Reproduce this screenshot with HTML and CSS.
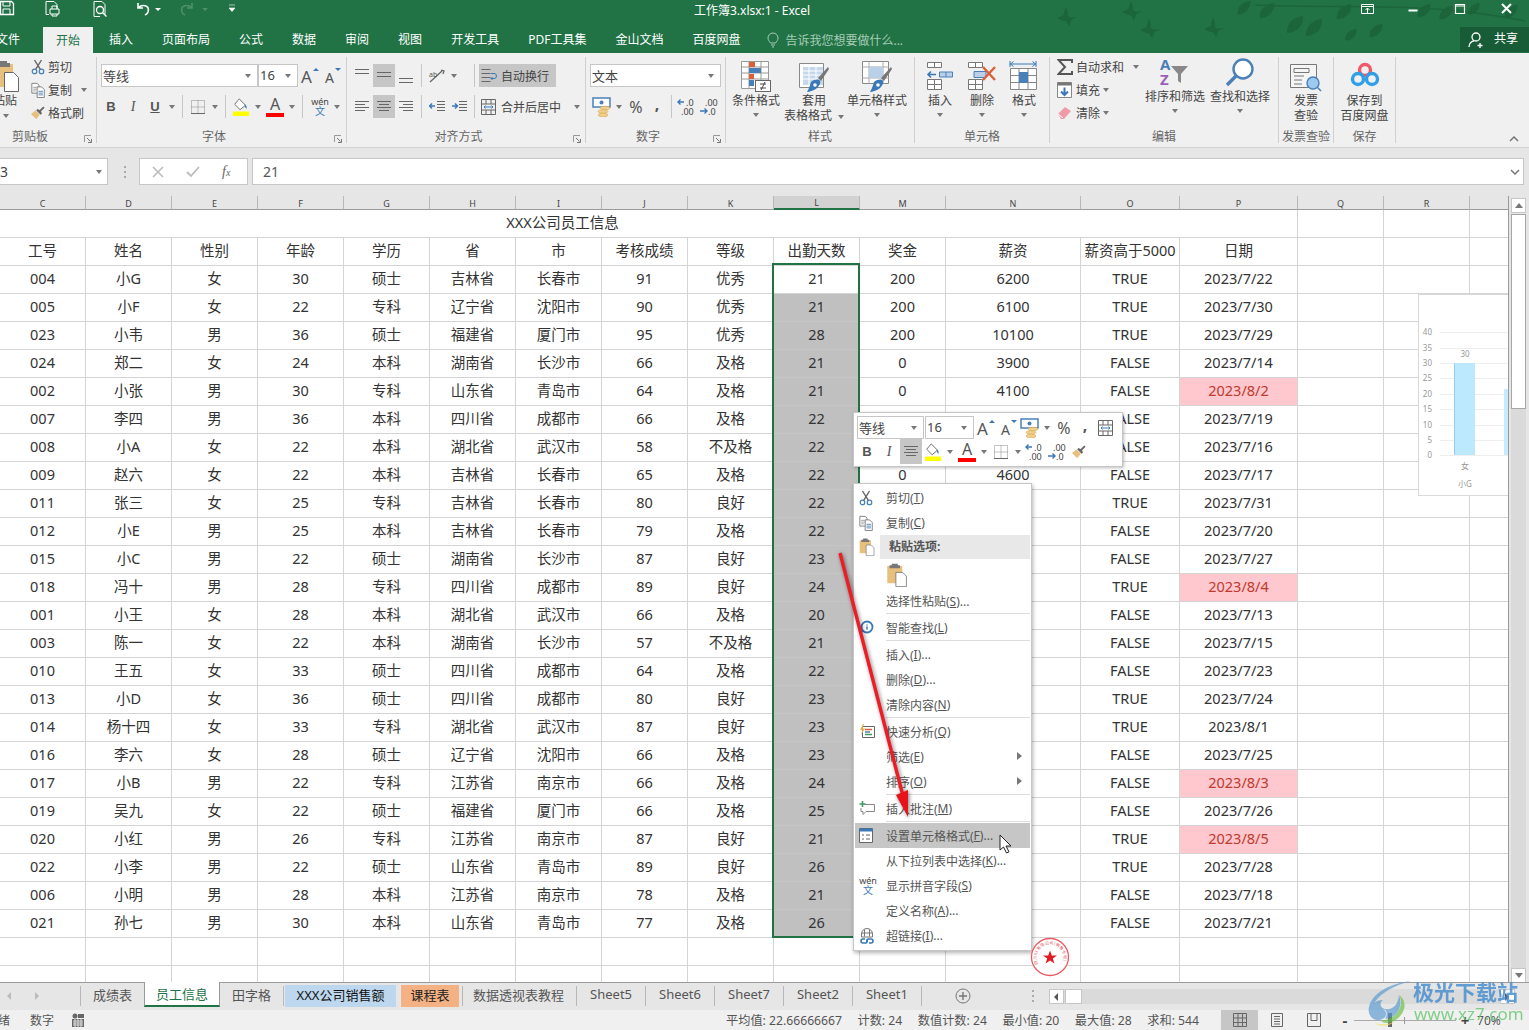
FILE: index.html
```html
<!DOCTYPE html>
<html lang="zh-CN">
<head>
<meta charset="utf-8">
<title>工作簿3.xlsx:1 - Excel</title>
<link rel="stylesheet" href="styles.css">
</head>
<body>
<svg class="defs" width="0" height="0">
<symbol id="scissors" viewBox="0 0 16 18"><circle cx="4" cy="14" r="2.6" fill="none" stroke="#4a7fb5" stroke-width="1.4"/><circle cx="12" cy="14" r="2.6" fill="none" stroke="#4a7fb5" stroke-width="1.4"/><path d="M5.5 11.5 12 1M10.5 11.5 4 1" stroke="#666" stroke-width="1.6" fill="none"/></symbol>
<symbol id="copy" viewBox="0 0 16 18"><path d="M.5 1.500h6l2 2v9h-8z" fill="#fff" stroke="#777"/><path d="M2 6h4M2 8h4M2 10h3" stroke="#999"/><path d="M6.500 5.500h5l3 3v9h-8z" fill="#fff" stroke="#777"/><path d="M8 10.500h5M8 12.500h5M8 14.500h5" stroke="#4a7fb5"/></symbol>
<symbol id="brush" viewBox="0 0 18 16"><path d="M1 9l6 6 4-5-5-5z" fill="#e8c07d"/><path d="M7 5l5 5 1.500-1.500-1-2.500 4-4L15 .5l-4 4L8 3.500z" fill="#666"/></symbol>
<symbol id="paste" viewBox="0 0 28 32"><path d="M1 4h20v23H1z" fill="#e8c07d"/><path d="M7 1h8v2h3v4H4V3h3z" fill="#777"/><path d="M12.500 12.500h9l5 5v14h-14z" fill="#fff" stroke="#666"/></symbol>
<symbol id="launch" viewBox="0 0 8 8"><path d="M.5 7V.5H7" fill="none" stroke="#999"/><path d="M3 3l3.500 3.500M7.500 4v3.500H4" fill="none" stroke="#777"/></symbol>
<symbol id="altop" viewBox="0 0 16 20"><path d="M1 3.500h14M1 7.500h14" stroke="#666" fill="none"/></symbol>
<symbol id="almid" viewBox="0 0 16 20"><path d="M1 6.500h14M1 10.500h14" stroke="#666" fill="none"/></symbol>
<symbol id="albot" viewBox="0 0 16 20"><path d="M1 12.500h14M1 16.500h14" stroke="#666" fill="none"/></symbol>
<symbol id="alleft" viewBox="0 0 16 14"><path d="M1 1.500h14M1 4.500h10M1 7.500h14M1 10.500h10" stroke="#666" fill="none"/></symbol>
<symbol id="alcenter" viewBox="0 0 16 14"><path d="M1 1.500h14M3 4.500h10M1 7.500h14M3 10.500h10" stroke="#666" fill="none"/></symbol>
<symbol id="alright" viewBox="0 0 16 14"><path d="M1 1.500h14M5 4.500h10M1 7.500h14M5 10.500h10" stroke="#666" fill="none"/></symbol>
<symbol id="border" viewBox="0 0 16 16"><path d="M1.500 1.500h13v13h-13zM8 1.500v13M1.500 8h13" fill="none" stroke="#888" stroke-dasharray="1 1"/><path d="M1 14.500h14" stroke="#666"/></symbol>
<symbol id="fill" viewBox="0 0 20 20"><path d="M8 1l7 7-6 5-6-6z" fill="#fff" stroke="#666"/><path d="M14 7c2 1 3 3 2 5-1.500-1-2-3-2-5z" fill="#4a7fb5"/><rect x="1" y="15" width="18" height="5" fill="#ff0"/></symbol>
<symbol id="acct" viewBox="0 0 20 20"><rect x="1" y="1" width="17" height="9" fill="#fff" stroke="#4a80b8" stroke-width="1.500"/><circle cx="9.500" cy="5.500" r="2" fill="#4a80b8"/><ellipse cx="13" cy="11" rx="5" ry="1.800" fill="#f0cf8e" stroke="#d8a850" stroke-width=".6"/><ellipse cx="11" cy="14.500" rx="5" ry="1.800" fill="#f0cf8e" stroke="#d8a850" stroke-width=".6"/><ellipse cx="11" cy="18" rx="5" ry="1.800" fill="#f0cf8e" stroke="#d8a850" stroke-width=".6"/></symbol>
<symbol id="decinc" viewBox="0 0 20 18"><path d="M7 4H1M3.500 1.500 1 4l2.500 2.500" fill="none" stroke="#3a78b8" stroke-width="1.400"/><text x="9" y="7.500" class="svt">.0</text><text x="4" y="16.500" class="svt">.00</text></symbol>
<symbol id="decdec" viewBox="0 0 20 18"><text x="6" y="7.500" class="svt">.00</text><path d="M1 13h7M5.500 10.500 8 13l-2.500 2.500" fill="none" stroke="#3a78b8" stroke-width="1.400"/><text x="9" y="16.500" class="svt">.0</text></symbol>
<symbol id="merge" viewBox="0 0 16 16"><path d="M.5.5h14v15H.5zM.5 5h14M.5 11h14M5 .5V5M10 .5V5M5 11v4.500M10 11v4.500" fill="none" stroke="#666"/><path d="M3 8h9M4.500 6.500 3 8l1.500 1.500M10.500 6.500 12 8l-1.500 1.500" fill="none" stroke="#3a78b8"/></symbol>
<symbol id="grow" viewBox="0 0 20 18"><text x="1" y="16" class="sva">A</text><path d="M13 4l3-3 3 3z" fill="#3a78b8"/></symbol>
<symbol id="shrink" viewBox="0 0 20 18"><text x="3" y="16" class="svb">A</text><path d="M13 1l3 3 3-3z" fill="#3a78b8"/></symbol>
<symbol id="leaf" viewBox="0 0 20 20"><path d="M2 18C1 9 8 2 18 1c1 9-6 17-16 17z" fill="#1c653b"/></symbol>
<symbol id="bird" viewBox="0 0 30 30"><path d="M1 16c5-1 7-3 9-3L13 1c3 4 4 8 3 12l4 3 9-1-8 4-3 9-4-7-5-1z" fill="#1c653b"/></symbol>
</svg>

<div class="app">
<header class="head">
<svg class="leaves" width="489" height="53" viewBox="0 0 489 53">
<path d="M215 5c60 3 120 0 180 4 30 2 60 6 90 12" fill="none" stroke="#1c653b" stroke-width="1.500"/>
<use href="#bird" x="15" y="6" width="24" height="22"/><use href="#bird" x="80" y="0" width="24" height="22"/><use href="#bird" x="98" y="18" width="24" height="22"/><use href="#bird" x="162" y="17" width="24" height="22"/>
<use href="#leaf" x="195" y="0" width="18" height="16"/><use href="#leaf" x="216" y="2" width="22" height="18"/><use href="#leaf" x="245" y="15" width="20" height="20"/><use href="#leaf" x="262" y="18" width="24" height="20"/><use href="#leaf" x="295" y="1" width="18" height="22"/><use href="#leaf" x="298" y="28" width="26" height="14"/><use href="#leaf" x="328" y="22" width="16" height="18"/><use href="#leaf" x="375" y="3" width="18" height="16"/><use href="#leaf" x="395" y="5" width="22" height="16"/><use href="#leaf" x="425" y="2" width="18" height="14"/><use href="#leaf" x="460" y="4" width="22" height="16"/>
</svg>
<div class="titlebar">
<svg class="qat" width="694" height="26" viewBox="0 0 694 26">
<path d="M.5 1.500h11l2 2v11H.5z" fill="none" stroke="#fff" stroke-width="1.300"/><path d="M3 2v4h7V2M3 14V9h7v5" fill="none" stroke="#fff"/>
<path d="M46 1.500h8l3 3v4M46 1.500v13h3" fill="none" stroke="#fff"/><path d="M50 9h9v5h-9zM52 9V6h5v3M52 14v2h5v-2" fill="none" stroke="#fff"/>
<path d="M94 1.500h8l3 3v10M94 1.500v15h6" fill="none" stroke="#fff"/><circle cx="100" cy="10" r="3.500" fill="none" stroke="#fff" stroke-width="1.300"/><path d="M102.500 12.500l4 4" stroke="#fff" stroke-width="1.500"/>
<path d="M138 3v5h5M138.500 7.500C142 4 150 5 148 12c-.5 1.500-2 2.500-3 3" fill="none" stroke="#fff" stroke-width="1.600"/><path d="M155 8h6l-3 3z" fill="#fff"/>
<path d="M192 3v5h-5M191.500 7.500C188 4 180 5 182 12c.5 1.500 2 2.500 3 3" fill="none" stroke="#4d8f69" stroke-width="1.600"/><path d="M202 8h6l-3 3z" fill="#4d8f69"/>
<path d="M229 5h6M229 8h6l-3 3.500z" fill="#fff" stroke="#fff" stroke-width=".6"/>
</svg>
<div class="wintitle">工作簿3.xlsx:1 - Excel</div>
<svg class="winbtns" width="184" height="26" viewBox="0 0 184 26">
<path d="M16.500 4.500h12v9h-12zM17 6.500h11" fill="none" stroke="#fff"/><path d="M22.500 13V8M20.500 10l2-2 2 2" fill="none" stroke="#fff"/>
<path d="M63.500 10.500h9" stroke="#fff" stroke-width="2"/>
<path d="M110.500 4.500h9v9h-9zM110 6h10" fill="none" stroke="#fff" stroke-width="1.200"/>
<path d="M157 4l9 9M166 4l-9 9" stroke="#fff" stroke-width="2"/>
</svg>
</div>
<nav class="tabbar">
<span class="tb tb-file">文件</span><span class="tb tb-on">开始</span><span class="tb">插入</span><span class="tb">页面布局</span><span class="tb">公式</span><span class="tb">数据</span><span class="tb">审阅</span><span class="tb">视图</span><span class="tb">开发工具</span><span class="tb">PDF工具集</span><span class="tb">金山文档</span><span class="tb">百度网盘</span>
<span class="tellme"><svg width="12" height="16" viewBox="0 0 12 16"><path d="M3.500 11C2 9 1 8 1 6a5 5 0 0 1 10 0c0 2-1 3-2.500 5zM4 13h4M5 15h2" fill="none" stroke="#a8ccb6"/></svg>告诉我您想要做什么...</span>
<span class="share"><svg width="18" height="18" viewBox="0 0 18 18"><circle cx="8" cy="6" r="4" fill="none" stroke="#fff" stroke-width="1.300"/><path d="M1 16c0-4 3-6 5-6M12 12v5M9.500 14.500h5" fill="none" stroke="#fff" stroke-width="1.300"/></svg><span class="share-t">共享</span></span>
</nav>
</header>

<section class="ribbon">
<div class="grp g1">
<div class="body">
<div class="pastebtn"><svg class="paste-big" width="30" height="32"><use href="#paste"/></svg><span class="paste-t">粘贴</span><i class="car"></i></div>
<div class="smcol">
<div class="sm"><span class="smi"><svg width="14" height="16"><use href="#scissors"/></svg></span>剪切</div>
<div class="sm"><span class="smi"><svg width="15" height="16"><use href="#copy"/></svg></span>复制<span class="c12 ml6"><i class="car"></i></span></div>
<div class="sm"><span class="smi"><svg width="16" height="14"><use href="#brush"/></svg></span>格式刷</div>
</div>
</div>
<div class="lbl lbl-g1">剪贴板</div>
<svg class="launch" width="8" height="8"><use href="#launch"/></svg>
</div>

<div class="grp g2">
<div class="body rows">
<div class="row">
<span class="sel w157"><b class="selv">等线</b><i class="car"></i></span><span class="sel w40"><b class="selv">16</b><i class="car"></i></span>
<span class="c22 ml1"><svg width="20" height="18"><use href="#grow"/></svg></span><span class="c22"><svg width="20" height="18"><use href="#shrink"/></svg></span>
</div>
<div class="row">
<span class="c22 tb-b">B</span><span class="c22 tb-i">I</span><span class="c22 tb-u">U</span><span class="c12"><i class="car"></i></span><i class="vs"></i>
<span class="c22"><svg width="16" height="16"><use href="#border"/></svg></span><span class="c12"><i class="car"></i></span><i class="vs"></i>
<span class="c22"><svg width="18" height="18"><use href="#fill"/></svg></span><span class="c12"><i class="car"></i></span>
<span class="c22"><span class="fa">A</span></span><span class="c12"><i class="car"></i></span><i class="vs"></i>
<span class="c22 wen ml2"><span>wén</span><em>文</em></span><span class="c12"><i class="car"></i></span>
</div>
</div>
<div class="lbl lbl-ln">字体</div>
<svg class="launch" width="8" height="8"><use href="#launch"/></svg>
</div>

<div class="grp g3">
<div class="body rows">
<div class="row">
<span class="c22"><svg width="16" height="20"><use href="#altop"/></svg></span><span class="c22 hl"><svg width="16" height="20"><use href="#almid"/></svg></span><span class="c22"><svg width="16" height="20"><use href="#albot"/></svg></span><i class="vs"></i>
<span class="c22"><svg width="18" height="16" viewBox="0 0 18 16"><path d="M2 14 14 3M13 2l3 1-1 3" fill="none" stroke="#666" stroke-width="1.300"/><text x="1" y="9" class="svb2">ab</text></svg></span><span class="c12"><i class="car"></i></span><i class="vs vs10"></i>
<span class="wrapbtn hl"><svg width="16" height="16" viewBox="0 0 16 16"><path d="M.5 1.500h9M.5 5.500h9M.5 9.500h9M.5 13.500h9" stroke="#666" fill="none"/><path d="M10 5.500h3a2 2 0 0 1 0 5h-3M11.500 9l-1.500 1.500 1.500 1.500" fill="none" stroke="#3a78b8"/></svg>自动换行</span>
</div>
<div class="row">
<span class="c22"><svg width="16" height="14"><use href="#alleft"/></svg></span><span class="c22 hl"><svg width="16" height="14"><use href="#alcenter"/></svg></span><span class="c22"><svg width="16" height="14"><use href="#alright"/></svg></span><i class="vs"></i>
<span class="c22"><svg width="16" height="14" viewBox="0 0 16 14"><path d="M8 1.500h8M8 4.500h8M8 7.500h8M8 10.500h8" stroke="#666"/><path d="M6 6H1M3 3.500 .5 6 3 8.500" fill="none" stroke="#3a78b8" stroke-width="1.500"/></svg></span><span class="c22"><svg width="16" height="14" viewBox="0 0 16 14"><path d="M8 1.500h8M8 4.500h8M8 7.500h8M8 10.500h8" stroke="#666"/><path d="M1 6h5M4 3.500 6.500 6 4 8.500" fill="none" stroke="#3a78b8" stroke-width="1.500"/></svg></span><i class="vs"></i>
<span class="mergebtn"><svg width="16" height="16"><use href="#merge"/></svg>合并后居中<span class="c12 ml6"><i class="car"></i></span></span>
</div>
</div>
<div class="lbl lbl-ln">对齐方式</div>
<svg class="launch" width="8" height="8"><use href="#launch"/></svg>
</div>

<div class="grp g4">
<div class="body rows">
<div class="row"><span class="sel w131"><b class="selv">文本</b><i class="car"></i></span></div>
<div class="row"><span class="c22 ml1"><svg width="20" height="20"><use href="#acct"/></svg></span><span class="c12"><i class="car"></i></span><span class="c22 pct">%</span><span class="c20 cma">,</span><i class="vs"></i><span class="c22"><svg width="20" height="18"><use href="#decinc"/></svg></span><span class="c22"><svg width="20" height="18"><use href="#decdec"/></svg></span></div>
</div>
<div class="lbl lbl-ln">数字</div>
<svg class="launch" width="8" height="8"><use href="#launch"/></svg>
</div>

<div class="grp g5">
<div class="body">
<div class="big w60">
<svg width="30" height="32" viewBox="0 0 30 32"><path d="M.5.500h27v27H.5zM.5 6h27M.5 12h27M.5 18h27M8 .5v27M20 .5v27" fill="#fff" stroke="#999"/><rect x="8" y="1" width="6" height="5" fill="#d9613a"/><rect x="8" y="7" width="12" height="5" fill="#4a80b8"/><rect x="8" y="13" width="5" height="5" fill="#d9613a"/><rect x="8" y="19" width="5" height="6" fill="#4a80b8"/><rect x="14.500" y="19.500" width="15" height="11" fill="#fff" stroke="#666"/><path d="M19 23h6M19 27h6M24 21l-4 8" stroke="#444" fill="none"/></svg>
<span>条件格式</span><i class="car"></i></div>
<div class="big w56">
<svg width="30" height="32" viewBox="0 0 30 32"><path d="M.5 2.500h24v24H.5z" fill="#fff" stroke="#888"/><path d="M4 6h20v18H4z" fill="#c5d7ea"/><path d="M4 10h20M4 14h20M4 18h20M10 6v18M17 6v18" stroke="#fff"/><path d="M19 17 29 6l1 2-8 12z" fill="#777"/><path d="M12 21c4-3 8-3 9-1s-1 5-3 7-8 4-10 4c2-3 3-7 4-10z" fill="#3a78b8"/><circle cx="16" cy="24" r="1.800" fill="#fff"/></svg>
<span>套用</span><span class="ln2">表格格式<i class="car ml6"></i></span></div>
<div class="big w60 ml5">
<svg width="30" height="32" viewBox="0 0 30 32"><path d="M.5 .5h26v22H.5z" fill="#fff" stroke="#888"/><path d="M.5 6h26M.5 17h26M7 .5v22M21 .5v22" stroke="#aaa"/><rect x="7" y="6" width="14" height="11" fill="#b9d0e8"/><path d="M19 17 29 6l1 2-8 12z" fill="#777"/><path d="M12 21c4-3 8-3 9-1s-1 5-3 7-8 4-10 4c2-3 3-7 4-10z" fill="#3a78b8"/><circle cx="16" cy="24" r="1.800" fill="#fff"/></svg>
<span>单元格样式</span><i class="car"></i></div>
</div>
<div class="lbl">样式</div>
</div>

<div class="grp g6">
<div class="body">
<div class="big w42">
<svg width="28" height="32" viewBox="0 0 28 32"><path d="M1.500 1.500h14v5h-14zM8.500 1.500v5M1.500 18.500h14v10h-14zM8.500 18.500v10M1.500 23.500h14" fill="#fff" stroke="#777"/><path d="M13.500 11h13v5h-13zM20 11v5" fill="#b9d0e8" stroke="#4a80b8"/><path d="M10 13.500H2M5 10.500l-3 3 3 3" fill="none" stroke="#3a78b8" stroke-width="1.600"/></svg>
<span>插入</span><i class="car"></i></div>
<div class="big w42">
<svg width="30" height="32" viewBox="0 0 30 32"><path d="M1.500 1.500h14v5h-14zM8.500 1.500v5M1.500 18.500h14v10h-14zM8.500 18.500v10M1.500 23.500h14" fill="#fff" stroke="#777"/><path d="M7 10.500h12v6H7z" fill="#b9d0e8" stroke="#4a80b8"/><path d="M16 6l12 13M28 6 16 19" stroke="#d9613a" stroke-width="2.400"/></svg>
<span>删除</span><i class="car"></i></div>
<div class="big w42">
<svg width="30" height="32" viewBox="0 0 30 32"><path d="M1 3h26M4.500 .5 1.500 3l3 2.500M23.500 .5l3 2.500-3 2.500M1 0v6M27 0v6" fill="none" stroke="#3a78b8"/><path d="M1.500 7.500h26v21h-26zM10 7.500v21M19 7.500v21M1.500 14.500h26M1.500 21.500h26" fill="#fff" stroke="#888"/><rect x="10" y="11" width="9" height="11" fill="#4a80b8"/></svg>
<span>格式</span><i class="car"></i></div>
</div>
<div class="lbl">单元格</div>
</div>

<div class="grp g7">
<div class="body">
<div class="smcol w87">
<div class="sm"><span class="smi smi2"><svg width="16" height="16" viewBox="0 0 16 16"><path d="M15 4V1H1.500L8 8l-6.500 7H15v-3" fill="none" stroke="#555" stroke-width="2"/></svg></span>自动求和<span class="c12 ml6"><i class="car"></i></span></div>
<div class="sm"><span class="smi smi2"><svg width="15" height="16" viewBox="0 0 15 16"><path d="M.5.5h14v15H.5z" fill="#fff" stroke="#888"/><path d="M.5.500h14v3H.5z" fill="#777"/><path d="M7.500 5.500v7M4 9.500l3.500 3.500L11 9.500" fill="none" stroke="#3a78b8" stroke-width="2"/></svg></span>填充<span class="c12"><i class="car"></i></span></div>
<div class="sm"><span class="smi smi2"><svg width="15" height="14" viewBox="0 0 15 14"><path d="M1 8l7-7 6 4-7 8H4z" fill="#ee9aa7"/><path d="M1 8l5 4" stroke="#fff"/></svg></span>清除<span class="c12"><i class="car"></i></span></div>
</div>
<div class="big w64">
<svg width="32" height="32" viewBox="0 0 32 32"><text x="1" y="13" class="svaz az-a">A</text><text x="1" y="28" class="svaz az-z">Z</text><path d="M12 9h17l-7 8v9l-3-2v-7z" fill="#888"/></svg>
<span>排序和筛选</span><i class="car"></i></div>
<div class="big w64 ml1">
<svg width="30" height="32" viewBox="0 0 30 32"><circle cx="18" cy="12" r="9.500" fill="#fff" stroke="#4a80b8" stroke-width="2.400"/><path d="M11 19 2 28" stroke="#4a80b8" stroke-width="3.400"/></svg>
<span>查找和选择</span><i class="car"></i></div>
</div>
<div class="lbl">编辑</div>
</div>

<div class="grp g8">
<div class="body">
<div class="big fullw">
<svg width="32" height="32" viewBox="0 0 32 32"><path d="M.5 3.500h26v23H.5z" fill="#f5f5f5" stroke="#777"/><path d="M4 7.500h15v4H4zM4 15h10M4 19h8M4 23h8" fill="none" stroke="#777"/><circle cx="23" cy="22" r="6" fill="#9dc8ef" stroke="#4a80b8" stroke-width="1.400"/><path d="M27 26l4 4" stroke="#4a80b8" stroke-width="1.600"/></svg>
<span>发票</span><span class="ln2">查验</span></div>
</div>
<div class="lbl">发票查验</div>
</div>

<div class="grp g9">
<div class="body">
<div class="big fullw">
<svg width="30" height="32" viewBox="0 0 30 32"><circle cx="15" cy="9" r="5.500" fill="none" stroke="#ed5a6a" stroke-width="3.400"/><circle cx="8" cy="18" r="5.500" fill="none" stroke="#2f9fe8" stroke-width="3.400"/><circle cx="22" cy="18" r="5.500" fill="none" stroke="#2f9fe8" stroke-width="3.400"/></svg>
<span>保存到</span><span class="ln2">百度网盘</span></div>
</div>
<div class="lbl">保存</div>
</div>
<svg class="collapse" width="10" height="6" viewBox="0 0 10 6"><path d="M1 5l4-4 4 4" fill="none" stroke="#777" stroke-width="1.500"/></svg>
</section>

<section class="formula">
<div class="namebox"><span>3</span><i class="car"></i></div>
<div class="grip"></div>
<div class="fxbox"><svg width="12" height="12" viewBox="0 0 12 12"><path d="M1 1l10 10M11 1 1 11" stroke="#bcbcbc" stroke-width="1.600"/></svg><svg width="14" height="12" viewBox="0 0 14 12"><path d="M1 6l4 4 8-9" fill="none" stroke="#bcbcbc" stroke-width="1.800"/></svg><span class="fx">f<small>x</small></span></div>
<div class="fxinput"><span>21</span><svg width="10" height="6" viewBox="0 0 10 6"><path d="M1 1l4 4 4-4" fill="none" stroke="#777" stroke-width="1.500"/></svg></div>
</section>

<section class="sheet">
<div class="grid">
<table>
<colgroup><col class="k86"><col class="k86"><col class="k86"><col class="k86"><col class="k86"><col class="k86"><col class="k86"><col class="k86"><col class="k86"><col class="k86"><col class="k86"><col class="k135"><col class="k99"><col class="k118"><col class="k86"><col class="k86"><col class="k39"></colgroup>
<tr class="ch"><th>C<th>D<th>E<th>F<th>G<th>H<th>I<th>J<th>K<th class="on">L<th>M<th>N<th>O<th>P<th>Q<th>R<th></tr>
<tr><td colspan="14" class="ttl">XXX公司员工信息<td><td><td></tr>
<tr><td>工号<td>姓名<td>性别<td>年龄<td>学历<td>省<td>市<td>考核成绩<td>等级<td>出勤天数<td>奖金<td>薪资<td>薪资高于5000<td>日期<td><td><td></tr>
<tr><td>004<td>小G<td>女<td>30<td>硕士<td>吉林省<td>长春市<td>91<td>优秀<td>21<td>200<td>6200<td>TRUE<td>2023/7/22<td><td><td></tr>
<tr><td>005<td>小F<td>女<td>22<td>专科<td>辽宁省<td>沈阳市<td>90<td>优秀<td class="s">21<td>200<td>6100<td>TRUE<td>2023/7/30<td><td><td></tr>
<tr><td>023<td>小韦<td>男<td>36<td>硕士<td>福建省<td>厦门市<td>95<td>优秀<td class="s">28<td>200<td>10100<td>TRUE<td>2023/7/29<td><td><td></tr>
<tr><td>024<td>郑二<td>女<td>24<td>本科<td>湖南省<td>长沙市<td>66<td>及格<td class="s">21<td>0<td>3900<td>FALSE<td>2023/7/14<td><td><td></tr>
<tr><td>002<td>小张<td>男<td>30<td>专科<td>山东省<td>青岛市<td>64<td>及格<td class="s">21<td>0<td>4100<td>FALSE<td class="p">2023/8/2<td><td><td></tr>
<tr><td>007<td>李四<td>男<td>36<td>本科<td>四川省<td>成都市<td>66<td>及格<td class="s">22<td><td><td>FALSE<td>2023/7/19<td><td><td></tr>
<tr><td>008<td>小A<td>女<td>22<td>本科<td>湖北省<td>武汉市<td>58<td>不及格<td class="s">22<td><td><td>FALSE<td>2023/7/16<td><td><td></tr>
<tr><td>009<td>赵六<td>女<td>22<td>本科<td>吉林省<td>长春市<td>65<td>及格<td class="s">22<td>0<td>4600<td>FALSE<td>2023/7/17<td><td><td></tr>
<tr><td>011<td>张三<td>女<td>25<td>专科<td>吉林省<td>长春市<td>80<td>良好<td class="s">22<td><td><td>TRUE<td>2023/7/31<td><td><td></tr>
<tr><td>012<td>小E<td>男<td>25<td>本科<td>吉林省<td>长春市<td>79<td>及格<td class="s">22<td><td><td>FALSE<td>2023/7/20<td><td><td></tr>
<tr><td>015<td>小C<td>男<td>22<td>硕士<td>湖南省<td>长沙市<td>87<td>良好<td class="s">23<td><td><td>FALSE<td>2023/7/27<td><td><td></tr>
<tr><td>018<td>冯十<td>男<td>28<td>专科<td>四川省<td>成都市<td>89<td>良好<td class="s">24<td><td><td>TRUE<td class="p">2023/8/4<td><td><td></tr>
<tr><td>001<td>小王<td>女<td>28<td>本科<td>湖北省<td>武汉市<td>66<td>及格<td class="s">20<td><td><td>FALSE<td>2023/7/13<td><td><td></tr>
<tr><td>003<td>陈一<td>女<td>22<td>本科<td>湖南省<td>长沙市<td>57<td>不及格<td class="s">21<td><td><td>FALSE<td>2023/7/15<td><td><td></tr>
<tr><td>010<td>王五<td>女<td>33<td>硕士<td>四川省<td>成都市<td>64<td>及格<td class="s">22<td><td><td>FALSE<td>2023/7/23<td><td><td></tr>
<tr><td>013<td>小D<td>女<td>36<td>硕士<td>四川省<td>成都市<td>80<td>良好<td class="s">23<td><td><td>TRUE<td>2023/7/24<td><td><td></tr>
<tr><td>014<td>杨十四<td>女<td>33<td>专科<td>湖北省<td>武汉市<td>87<td>良好<td class="s">23<td><td><td>TRUE<td>2023/8/1<td><td><td></tr>
<tr><td>016<td>李六<td>女<td>28<td>硕士<td>辽宁省<td>沈阳市<td>66<td>及格<td class="s">23<td><td><td>FALSE<td>2023/7/25<td><td><td></tr>
<tr><td>017<td>小B<td>男<td>22<td>专科<td>江苏省<td>南京市<td>66<td>及格<td class="s">24<td><td><td>FALSE<td class="p">2023/8/3<td><td><td></tr>
<tr><td>019<td>吴九<td>女<td>22<td>硕士<td>福建省<td>厦门市<td>66<td>及格<td class="s">25<td><td><td>FALSE<td>2023/7/26<td><td><td></tr>
<tr><td>020<td>小红<td>男<td>26<td>专科<td>江苏省<td>南京市<td>87<td>良好<td class="s">21<td><td><td>TRUE<td class="p">2023/8/5<td><td><td></tr>
<tr><td>022<td>小李<td>男<td>22<td>硕士<td>山东省<td>青岛市<td>89<td>良好<td class="s">26<td><td><td>TRUE<td>2023/7/28<td><td><td></tr>
<tr><td>006<td>小明<td>男<td>28<td>本科<td>江苏省<td>南京市<td>78<td>及格<td class="s">21<td><td><td>FALSE<td>2023/7/18<td><td><td></tr>
<tr><td>021<td>孙七<td>男<td>30<td>本科<td>山东省<td>青岛市<td>77<td>及格<td class="s">26<td><td><td>FALSE<td>2023/7/21<td><td><td></tr>
<tr><td><td><td><td><td><td><td><td><td><td><td><td><td><td><td><td><td><td></tr>
<tr><td><td><td><td><td><td><td><td><td><td><td><td><td><td><td><td><td><td></tr>
</table>
<div class="selbox"></div>
<svg class="chart" width="90" height="202" viewBox="0 0 90 202">
<rect x=".5" y=".5" width="100" height="201" fill="#fff" stroke="#d9d9d9"/>
<path d="M22 38.500h68M22 54.500h68M22 69.500h68M22 84.500h68M22 100.500h68M22 115.500h68M22 131.500h68M22 146.500h68M22 161.500h68" stroke="#eee"/>
<rect x="36" y="69" width="21" height="92" fill="#bde9ff"/><rect x="36" y="69" width="1" height="92" fill="#8fd0f8"/><rect x="86" y="95" width="4" height="66" fill="#c4ecff"/>
<g class="chl"><text x="14" y="41">40</text><text x="14" y="57">35</text><text x="14" y="72">30</text><text x="14" y="87">25</text><text x="14" y="103">20</text><text x="14" y="118">15</text><text x="14" y="134">10</text><text x="14" y="149">5</text><text x="14" y="164">0</text></g>
<g class="chm"><text x="47" y="63">30</text><text x="47" y="175">女</text><text x="47" y="193">小G</text></g>
</svg>
</div>
<div class="vscroll">
<div class="sbtn"><i class="up"></i></div>
<div class="sthumb"></div>
<div class="strack"></div>
<div class="sbtn"><i class="dn"></i></div>
</div>
</section>

<section class="tabs">
<div class="nav"><i class="nl"></i><i class="nr"></i></div><i class="ts"></i>
<span class="st">成绩表</span><span class="st st-on">员工信息</span><span class="st">田字格</span><i class="ts"></i>
<span class="st st-blue">XXX公司销售额</span><span class="st st-or">课程表</span><i class="ts"></i>
<span class="st st-long">数据透视表教程</span><i class="ts"></i>
<span class="st st-s">Sheet5</span><i class="ts"></i><span class="st st-s">Sheet6</span><i class="ts"></i><span class="st st-s">Sheet7</span><i class="ts"></i><span class="st st-s">Sheet2</span><i class="ts"></i><span class="st st-s">Sheet1</span><i class="ts"></i>
<svg class="plus" width="16" height="16" viewBox="0 0 16 16"><circle cx="8" cy="8" r="7" fill="none" stroke="#777"/><path d="M4 8h8M8 4v8" stroke="#777" stroke-width="1.400"/></svg>
<span class="dots"></span>
<div class="hscroll"><span class="hb"><i class="nl2"></i></span><span class="hthumb"></span><span class="hrest"></span><span class="hb"><i class="nr2"></i></span></div>
</section>

<footer class="status">
<span class="stl">就绪</span><span class="stn">数字</span>
<svg class="sticon" width="12" height="14" viewBox="0 0 12 14"><circle cx="3" cy="3" r="2.500" fill="#666"/><path d="M6 1h6v4H6zM0 6h12v8H0z" fill="#666"/><path d="M1 8h10M1 10h10M1 12h10M3 6v8M6 6v8M9 6v8" stroke="#ddd"/></svg>
<div class="stats"><span>平均值: 22.66666667</span><span>计数: 24</span><span>数值计数: 24</span><span>最小值: 20</span><span>最大值: 28</span><span>求和: 544</span></div>
<span class="view view-on"><svg width="14" height="14" viewBox="0 0 14 14"><path d="M.5.5h13v13H.5zM5 .5v13M9.500 .5v13M.5 5h13M.5 9.500h13" fill="none" stroke="#666"/></svg></span>
<span class="view"><svg width="12" height="14" viewBox="0 0 12 14"><path d="M.5.5h11v13H.5zM3 3.500h6M3 6h6M3 8.500h6M3 11h6" fill="none" stroke="#666"/></svg></span>
<span class="view"><svg width="14" height="14" viewBox="0 0 14 14"><path d="M.5.500h13v13H.5zM4 .5v7h6v-7" fill="none" stroke="#666"/></svg></span>
<span class="zoom"><b class="zm">-</b><span class="slider"><i class="knob"></i><i class="tick"></i></span><b class="zp">+</b><span class="zv">70%</span></span>
</footer>

<div class="minibar">
<div class="mrow">
<span class="sel w67"><b class="selv">等线</b><i class="car"></i></span><span class="sel w49"><b class="selv">16</b><i class="car"></i></span>
<span class="c22"><svg width="20" height="18"><use href="#grow"/></svg></span><span class="c22"><svg width="20" height="18"><use href="#shrink"/></svg></span><span class="c22"><svg width="20" height="20"><use href="#acct"/></svg></span><span class="c12"><i class="car"></i></span><span class="c22 pct">%</span><span class="c20 cma">,</span><span class="c22"><svg width="16" height="16"><use href="#merge"/></svg></span>
</div>
<div class="mrow mrow2">
<span class="c22 tb-b">B</span><span class="c22 tb-i">I</span><span class="c22 hl"><svg width="16" height="14"><use href="#alcenter"/></svg></span><span class="c22"><svg width="18" height="18"><use href="#fill"/></svg></span><span class="c12"><i class="car"></i></span><span class="c22"><span class="fa">A</span></span><span class="c12"><i class="car"></i></span><span class="c22"><svg width="16" height="16"><use href="#border"/></svg></span><span class="c12"><i class="car"></i></span><span class="c22"><svg width="20" height="18"><use href="#decinc"/></svg></span><span class="c22"><svg width="20" height="18"><use href="#decdec"/></svg></span><span class="c22"><svg width="16" height="14"><use href="#brush"/></svg></span>
</div>
</div>

<div class="cmenu">
<div class="mi"><span class="mic"><svg width="14" height="16"><use href="#scissors"/></svg></span>剪切(<u>T</u>)</div>
<div class="mi"><span class="mic"><svg width="15" height="16"><use href="#copy"/></svg></span>复制(<u>C</u>)</div>
<div class="mi mh-row"><span class="mic"><svg width="16" height="18"><use href="#paste"/></svg></span><span class="mh">粘贴选项:</span></div>
<div class="mpaste"><svg width="22" height="24"><use href="#paste"/></svg></div>
<div class="mi mi24"><span class="mic"></span>选择性粘贴(<u>S</u>)...</div>
<hr class="ms">
<div class="mi"><span class="mic"><svg width="15" height="15" viewBox="0 0 15 15"><circle cx="8" cy="7" r="5.500" fill="#fff" stroke="#3a78b8" stroke-width="1.800"/><path d="M8 4.500v1M8 6.500v3" stroke="#3a78b8" stroke-width="1.500"/><path d="M3.500 11 1 14" stroke="#3a78b8" stroke-width="1.800"/></svg></span>智能查找(<u>L</u>)</div>
<hr class="ms">
<div class="mi"><span class="mic"></span>插入(<u>I</u>)...</div>
<div class="mi"><span class="mic"></span>删除(<u>D</u>)...</div>
<div class="mi"><span class="mic"></span>清除内容(<u>N</u>)</div>
<hr class="ms">
<div class="mi"><span class="mic"><svg width="16" height="15" viewBox="0 0 16 15"><path d="M3.500 2.500h12v11h-12z" fill="#fff" stroke="#666"/><path d="M6 5.500h7" stroke="#d9613a" stroke-width="1.500"/><path d="M6 8h5" stroke="#4a80b8" stroke-width="1.500"/><path d="M6 10.500h7" stroke="#3f9a5f" stroke-width="1.500"/><path d="M4 0 1 6h2.500L2 11l4-6.500H3.500L5 0z" fill="#f0b040"/></svg></span>快速分析(<u>Q</u>)</div>
<div class="mi"><span class="mic"></span>筛选(<u>E</u>)<i class="sub"></i></div>
<div class="mi"><span class="mic"></span>排序(<u>O</u>)<i class="sub"></i></div>
<hr class="ms">
<div class="mi"><span class="mic"><svg width="16" height="15" viewBox="0 0 16 15"><path d="M5.500 3.500h10v7H7l-3 3v-3H2V7" fill="none" stroke="#888"/><path d="M3.500 0v6M.5 3h6" stroke="#3f9a5f" stroke-width="1.600"/></svg></span>插入批注(<u>M</u>)</div>
<hr class="ms">
<div class="mi mi-on"><span class="mic"><svg width="14" height="15" viewBox="0 0 14 15"><path d="M.5.500h13v14H.5z" fill="#fff" stroke="#666"/><path d="M.5.500h13v3H.5z" fill="#3a78b8"/><path d="M3 7h2M7 7h4M3 11h2M7 11h4" stroke="#666" stroke-width="1.200"/></svg></span>设置单元格格式(<u>F</u>)...</div>
<div class="mi"><span class="mic"></span>从下拉列表中选择(<u>K</u>)...</div>
<div class="mi"><span class="mic wen wenm"><span>wén</span><em>文</em></span>显示拼音字段(<u>S</u>)</div>
<div class="mi"><span class="mic"></span>定义名称(<u>A</u>)...</div>
<div class="mi"><span class="mic"><svg width="16" height="16" viewBox="0 0 16 16"><path d="M8 .5a5.500 5.500 0 0 1 5.500 5.500v3h-11V6A5.500 5.500 0 0 1 8 .5zM2.500 5h11M5.500 1.500v7M10.500 1.500v7" fill="none" stroke="#777"/><path d="M6 11H4a2 2 0 0 0 0 4h3a2 2 0 0 0 1-3M10 15h2a2 2 0 0 0 0-4H9a2 2 0 0 0-1 3" fill="none" stroke="#3a78b8" stroke-width="1.600"/></svg></span>超链接(<u>I</u>)...</div>
</div>

<svg class="arrow" width="100" height="290" viewBox="0 0 100 290">
<defs><filter id="sh" x="-30%" y="-10%" width="160%" height="120%"><feGaussianBlur stdDeviation="2"/></filter></defs>
<g filter="url(#sh)" opacity=".55"><path d="M11 8 74 250" stroke="#000" stroke-width="3" fill="none"/><path d="M67 250 79 245 79 272z" fill="#000"/></g>
<path d="M10 7 73 250" stroke="#ee1c25" stroke-width="3.400" fill="none"/><path d="M66 249 78 244 78 271z" fill="#e8121b"/>
</svg>

<svg class="cursor" width="14" height="20" viewBox="0 0 14 20"><path d="M1 1v15l3.500-3 3 6 2.500-1.200-3-5.800h5z" fill="#fff" stroke="#222"/></svg>

<svg class="stamp" width="40" height="40" viewBox="0 0 40 40">
<circle cx="20" cy="20" r="18.500" fill="#fff" stroke="#ea5a62" stroke-width="1.300"/>
<path id="ring" d="M8 27a13.500 13.500 0 1 1 24 0" fill="none"/>
<text class="stamp-t"><textPath href="#ring">四川XX有限公司(销售专用)</textPath></text>
<path d="M20 13.500l1.800 5h5.200l-4.200 3 1.600 5-4.400-3.100-4.400 3.100 1.600-5-4.200-3h5.200z" fill="#e11b22"/>
</svg>

<div class="wm">
<svg width="46" height="50" viewBox="0 0 46 50"><path d="M44 2C26 4 6 12 2 28c-2 8 4 14 10 13 8-1 9-8 4-11 4 0 5 6 2 10 14-2 18-14 14-24-1 10-6 15-14 14-5-1-6-6-2-9-8 0-12 5-10 10C4 22 20 8 44 2z" fill="#5b9ad0" opacity=".8"/><path d="M32 16c6 10-2 24-18 26 4 4 14 2 20-6 6-8 4-16-2-20z" fill="#6cc04a" opacity=".8"/><path d="M8 44c6 2 14 2 20-2-6 6-16 6-20 2z" fill="#f0e060" opacity=".85"/></svg>
<div class="wmtext"><span class="wm1">极光下载站</span><span class="wm2">www.xz7.com</span></div>
</div>
</div>
</body>
</html>
```
FILE: styles.css
```css
* { box-sizing: border-box; }
html, body { margin: 0; padding: 0; }
body { font-family: "Noto Sans", "Noto Sans CJK SC", sans-serif; font-size: 12px; color: #444; overflow: hidden; }
.defs { position: absolute; }
.app { position: relative; width: 1529px; height: 1030px; overflow: hidden; display: flex; flex-direction: column; background: #f0f0f0; }
svg { display: block; flex: none; }
i, em { font-style: normal; }
.svt { font: 9px "Noto Sans", sans-serif; fill: #444; }
.sva { font: 17px "Noto Sans", sans-serif; fill: #555; }
.svb { font: 14px "Noto Sans", sans-serif; fill: #555; }
.svb2 { font: 7px "Noto Sans", sans-serif; fill: #555; }
.svaz { font: bold 15px "Noto Sans", sans-serif; }
.az-a { fill: #4a80b8; }
.az-z { fill: #9a60b8; }

/* head */
.head { position: relative; background: #217346; height: 53px; color: #fff; flex: none; }
.leaves { position: absolute; left: 1040px; top: 0; }
.titlebar { position: relative; height: 26px; display: flex; }
.wintitle { line-height: 22px; height: 26px; width: 651px; font-size: 12px; }
.tabbar { position: relative; height: 27px; display: flex; align-items: stretch; gap: 29px; }
.tb { display: flex; align-items: center; white-space: nowrap; font-size: 12px; padding-bottom: 2px; }
.tb-file { margin-left: -4px; }
.tb-on { background: #f0f0f0; color: #217346; margin: 1px -13px 0 -6px; padding: 0 13px 1px; }
.tellme { display: flex; align-items: center; gap: 6px; margin-left: -2px; color: #a8ccb6; font-size: 12px; }
.share { margin-left: auto; width: 69px; margin-top: 1px; margin-bottom: 1px; display: flex; align-items: center; gap: 8px; padding-left: 8px; background: #185c37; }
.share-t { padding-bottom: 3px; }

/* ribbon */
.ribbon { position: relative; flex: none; height: 95px; background: #f0f0f0; border-bottom: 1px solid #d2d2d2; display: flex; padding-top: 4px; align-items: flex-start; }
.grp { position: relative; height: 86px; border-right: 1px solid #d0d0d0; display: flex; flex-direction: column; flex: none; }
.g1 { width: 97px; } .g2 { width: 250px; } .g3 { width: 239px; } .g4 { width: 140px; } .g5 { width: 189px; } .g6 { width: 135px; } .g7 { width: 229px; } .g8 { width: 55px; } .g9 { width: 62px; }
.body { height: 72px; display: flex; align-items: flex-start; }
.lbl { height: 14px; line-height: 15px; text-align: center; color: #666; white-space: nowrap; }
.lbl-ln { padding-right: 15px; }
.lbl-g1 { padding-right: 36px; }
.launch { position: absolute; right: 4px; bottom: 0; }
.collapse { position: absolute; right: 10px; bottom: 5px; }
.car { display: inline-block; width: 0; height: 0; border: 3.5px solid transparent; border-top: 4px solid #777; border-bottom: 0; flex: none; }
.rows { flex-direction: column; padding-top: 7px; gap: 8px; }
.row { display: flex; height: 23px; align-items: center; }
.g2 .rows { padding-left: 3px; } .g3 .rows { padding-left: 4px; } .g4 .rows { padding-left: 4px; }
.g5 .body { padding-top: 4px; } .g6 .body { padding: 4px 0 0 4px; } .g7 .body { padding: 0 0 0 6px; } .g8 .body, .g9 .body { padding-top: 4px; }
.g2 .sel { margin-left: 1px; } .g2 .sel + .sel { margin-left: 0; }
.sel { display: flex; align-items: center; justify-content: space-between; height: 23px; background: #fff; border: 1px solid #c6c6c6; padding: 0 6px 0 1px; flex: none; }
.selv { font-weight: 400; font-size: 13px; color: #444; padding-bottom: 1px; }
.w157 { width: 157px; } .w40 { width: 40px; } .w131 { width: 131px; } .w67 { width: 67px; } .w49 { width: 49px; }
.c22, .c12, .c20 { display: flex; align-items: center; justify-content: center; height: 23px; flex: none; }
.c22 { width: 22px; } .c12 { width: 12px; } .c20 { width: 20px; }
.ml1 { margin-left: 1px; } .ml2 { margin-left: 2px; } .ml5 { margin-left: 5px; } .ml6 { margin-left: 6px; }
.hl { background: #c6c6c6; }
.vs { width: 1px; height: 23px; background: #c6c6c6; margin: 0 4px; flex: none; }
.vs10 { margin-left: 14px; }
.tb-b { font: bold 13px "Liberation Sans", sans-serif; color: #555; }
.tb-i { font: italic 14px "Liberation Serif", serif; color: #555; }
.tb-u { font: bold 13px "Liberation Sans", sans-serif; color: #555; text-decoration: underline; }
.fa { font: 16px/15px "Noto Sans", sans-serif; color: #555; border-bottom: 4px solid #f00; width: 18px; text-align: center; display: block; height: 20px; }
.wen { flex-direction: column; line-height: 9px; font-size: 9px; color: #444; }
.wen em { color: #3a78b8; font-size: 10px; line-height: 10px; }
.pct { font-size: 16px; color: #555; }
.cma { font-size: 16px; font-weight: 700; color: #555; padding-bottom: 6px; }
.wrapbtn { width: 77px; height: 23px; display: flex; align-items: center; gap: 4px; padding-left: 2px; flex: none; }
.mergebtn { display: flex; align-items: center; gap: 4px; height: 23px; flex: none; padding-left: 2px; }
.big { display: flex; flex-direction: column; align-items: center; line-height: 15px; white-space: nowrap; flex: none; }
.big svg { height: 32px; }
.big > .car { margin-top: 5px; }
.big .ln2 { display: block; }
.big .ln2 .car { vertical-align: middle; }
.w60 { width: 60px; } .w56 { width: 56px; } .w42 { width: 42px; } .w64 { width: 64px; } .fullw { width: 100%; }
.w87 { width: 87px; }

.pastebtn { width: 26px; overflow: hidden; display: flex; flex-direction: column; padding-top: 3px; flex: none; }
.paste-big { margin-left: -9px; }
.paste-t { margin-left: -7px; line-height: 18px; white-space: nowrap; width: 30px; }
.pastebtn .car { margin: 4px 0 0 3px; }
.smcol { margin-top: -2px; margin-left: 2px; }
.g7 .smcol { margin-left: 0; }
.sm { display: flex; align-items: center; height: 23px; white-space: nowrap; }
.smi { width: 20px; display: flex; justify-content: center; flex: none; }
.smi2 { justify-content: flex-start; padding-left: 1px; }

/* formula */
.formula { flex: none; height: 48px; background: #e6e6e6; display: flex; padding-top: 10px; align-items: flex-start; }
.namebox { width: 108px; height: 27px; background: #fff; border: 1px solid #c6c6c6; border-left: 0; display: flex; align-items: center; justify-content: space-between; padding: 0 5px 0 0; font-size: 14px; }
.grip { width: 2px; height: 12px; margin: 8px 14px 0 16px; background: repeating-linear-gradient(#aaa 0 2px, transparent 2px 5px); flex: none; }
.fxbox { width: 109px; height: 27px; background: #fff; border: 1px solid #c6c6c6; display: flex; align-items: center; padding-left: 12px; gap: 22px; flex: none; margin-left: -1px; }
.fx { font: italic 14px "Liberation Serif", serif; color: #666; }
.fx small { font-size: 10px; }
.fxinput { width: 1272px; height: 27px; margin-left: 4px; background: #fff; border: 1px solid #c6c6c6; display: flex; align-items: center; justify-content: space-between; padding: 0 3px 0 10px; font-size: 14px; color: #555; }

/* sheet */
.sheet { flex: none; height: 786px; display: flex; background: #e6e6e6; }
.grid { position: relative; width: 1509px; height: 786px; overflow: hidden; border-right: 1px solid #9b9b9b; flex: none; }
table { border-collapse: separate; border-spacing: 0; table-layout: fixed; width: 1508px; background: #fff; }
.k86 { width: 86px; } .k135 { width: 135px; } .k99 { width: 99px; } .k118 { width: 118px; } .k39 { width: 39px; }
tr { height: 28px; }
td { padding: 0 0 2px; height: 28px; border-right: 1px solid #d4d4d4; border-bottom: 1px solid #d4d4d4; text-align: center; font-size: 14.5px; color: #333; line-height: 1; white-space: nowrap; }
tr.ch { height: 13px; }
th { padding: 1px 0 0; height: 13px; background: #e6e6e6; border-right: 1px solid #b8b8b8; border-bottom: 1px solid #9b9b9b; font-size: 9px; font-weight: 400; line-height: 11px; color: #444; }
th.on { background: #d2d2d2; border-bottom: 2px solid #217346; }
.ttl { padding-right: 172px; }
td.s { background: #c0c0c0; border-right-color: #c0c0c0; border-bottom-color: #c6c6c6; }
td.p { background: #ffc7ce; color: #c0392b; }
.selbox { position: absolute; left: 772px; top: 67px; width: 88px; height: 675px; border: 2px solid #217346; }
.chart { position: absolute; left: 1418px; top: 98px; }
.chl text { font: 8px "Noto Sans", sans-serif; fill: #999; text-anchor: end; }
.chm text { font: 8px "Noto Sans", "Noto Sans CJK SC", sans-serif; fill: #999; text-anchor: middle; }

.vscroll { flex: 1; padding: 2px 3px 0 2px; display: flex; flex-direction: column; }
.sbtn { height: 15px; background: #fff; border: 1px solid #c6c6c6; display: flex; align-items: center; justify-content: center; flex: none; }
.up { border: 4px solid transparent; border-bottom: 5px solid #777; border-top: 0; }
.dn { border: 4px solid transparent; border-top: 5px solid #777; border-bottom: 0; }
.sthumb { height: 195px; margin-top: 1px; background: #fff; border: 1px solid #a6a6a6; flex: none; }
.strack { height: 559px; background: #dadada; flex: none; }

/* sheet tabs */
.tabs { flex: none; height: 28px; background: #e6e6e6; border-top: 1px solid #9b9b9b; display: flex; align-items: flex-start; font-size: 13px; color: #555; }
.nav { width: 80px; height: 25px; display: flex; align-items: center; gap: 24px; padding-left: 7px; flex: none; }
.nl { border: 4px solid transparent; border-right: 4px solid #bbb; border-left: 0; }
.nr { border: 4px solid transparent; border-left: 4px solid #bbb; border-right: 0; }
.ts { width: 1px; height: 20px; margin-top: 3px; background: #b8b8b8; flex: none; }
.st { padding: 0 12px 2px; height: 24px; display: flex; align-items: center; white-space: nowrap; flex: none; }
.st-on { background: #fff; color: #217346; border-bottom: 2px solid #217346; height: 25px; margin-top: -1px; border-left: 1px solid #9b9b9b; border-right: 1px solid #9b9b9b; padding: 0 11px; }
.st-blue { background: #bdd7ee; color: #111; margin: 2px 0 0 1px; padding: 0 10px 3px; height: 22px; width: 111px; justify-content: center; }
.st-or { background: #f4b183; color: #222; margin: 2px 3px 0 5px; padding: 0 10px 3px; height: 22px; width: 58px; justify-content: center; }
.st-long { padding: 0 12px 2px 10px; }
.st-s { padding: 0 13px 2px; }
.plus { margin: 5px 0 0 33px; }
.dots { width: 2px; height: 12px; margin: 7px 0 0 61px; background: repeating-linear-gradient(#aaa 0 2px, transparent 2px 5px); flex: none; }
.hscroll { width: 466px; margin: 6px 0 0 15px; height: 15px; display: flex; background: #dadada; flex: none; }
.hb { width: 15px; height: 15px; background: #fff; border: 1px solid #c6c6c6; display: flex; align-items: center; justify-content: center; flex: none; }
.nl2 { border: 4px solid transparent; border-right: 4px solid #555; border-left: 0; }
.nr2 { border: 4px solid transparent; border-left: 4px solid #555; border-right: 0; }
.hthumb { width: 17px; background: #fff; border: 1px solid #c6c6c6; margin-left: 1px; flex: none; }
.hrest { flex: 1; }

/* status */
.status { flex: none; height: 20px; background: #f0f0f0; display: flex; align-items: center; position: relative; color: #555; }
.stl { margin-left: -14px; width: 24px; white-space: nowrap; }
.stn { margin-left: 20px; }
.sticon { margin-left: 18px; }
.stats { display: flex; gap: 15.5px; margin-left: 642px; width: 495px; white-space: nowrap; flex: none; font-size: 12.2px; }
.view { width: 37px; height: 20px; display: flex; align-items: center; justify-content: center; flex: none; }
.view-on { background: #c6c6c6; }
.zoom { display: flex; align-items: center; margin-left: 8px; }
.zm, .zp { font-weight: 700; font-size: 15px; color: #444; width: 10px; text-align: center; }
.slider { position: relative; width: 102px; height: 1px; background: #aaa; margin: 0 4px; }
.knob { position: absolute; left: 34px; top: -7px; width: 4px; height: 14px; background: #666; }
.tick { position: absolute; left: 50px; top: -3px; width: 1px; height: 7px; background: #999; }
.zv { margin-left: 7px; }

/* mini toolbar */
.minibar { position: absolute; left: 853px; top: 412px; width: 270px; height: 55px; background: #fff; border: 1px solid #c6c6c6; box-shadow: 1px 1px 3px rgba(0,0,0,.25); padding: 3px 0 0 3px; }
.mrow { display: flex; height: 23px; align-items: center; }
.minibar .sel { margin-right: 1px; }
.mrow2 { height: 25px; margin-left: -1px; }
.mrow2 .c22, .mrow2 .c12 { height: 25px; }

/* context menu */
.cmenu { position: absolute; left: 853px; top: 483px; width: 179px; height: 468px; background: #fff; border: 1px solid #c6c6c6; box-shadow: 1px 2px 4px rgba(0,0,0,.3); padding: 1px; color: #555; }
.mi { position: relative; display: flex; align-items: center; height: 25px; white-space: nowrap; }
.mi u { text-decoration: underline; }
.mic { width: 31px; display: flex; justify-content: flex-start; padding-left: 4px; flex: none; }
.mi24 { height: 24px; }
.mh-row { height: 24px; }
.mh { margin-left: -6px; padding-left: 9px; flex: 1; height: 24px; line-height: 24px; background: #e8e8e8; font-weight: 700; color: #555; }
.mpaste { height: 30px; padding: 4px 0 0 31px; }
.ms { border: 0; height: 1px; margin: 0 0 1px 31px; background: #ddd; }
.mi-on { background: #c6c6c6; }
.sub { position: absolute; right: 8px; top: 8px; border: 4px solid transparent; border-left: 5px solid #777; border-right: 0; }
.wenm { padding-left: 0; width: 31px; align-items: flex-start; }
.wenm span, .wenm em { width: 26px; text-align: center; }

/* overlays */
.arrow { position: absolute; left: 830px; top: 546px; }
.cursor { position: absolute; left: 999px; top: 834px; }
.stamp { position: absolute; left: 1030px; top: 937px; }
.stamp-t { font-family: "Noto Sans CJK SC", sans-serif; font-size: 4px; fill: #e8505a; letter-spacing: .3px; }
.wm { position: absolute; left: 1367px; top: 979px; display: flex; align-items: flex-start; opacity: .85; }
.wmtext { display: flex; flex-direction: column; }
.wm1 { font: 700 21px/24px "Noto Sans CJK SC", sans-serif; color: #4a90d0; white-space: nowrap; }
.wm2 { font: 17px/21px "Noto Sans", sans-serif; color: #70c878; white-space: nowrap; margin-left: 1px; }
```
